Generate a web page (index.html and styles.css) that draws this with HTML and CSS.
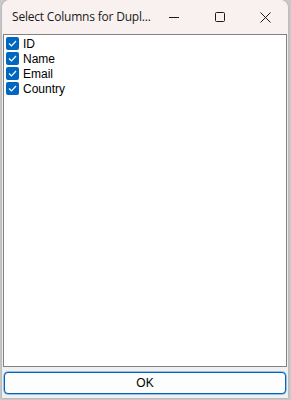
FILE: index.html
```html
<!DOCTYPE html>
<html>
<head><meta charset="utf-8"><link rel="stylesheet" href="styles.css"></head>
<body>
<div class="window">
  <div class="titlebar">
    <span class="title">Select Columns for Dupl...</span>
    <div class="controls">
      <span class="ctl"><svg width="10" height="10" viewBox="0 0 10 10"><path d="M0 5.5H10" stroke="#1a1a1a" stroke-width="1"/></svg></span>
      <span class="ctl"><svg width="10" height="10" viewBox="0 0 10 10"><rect x="0.5" y="0.5" width="9" height="9" rx="1" fill="none" stroke="#1a1a1a" stroke-width="1"/></svg></span>
      <span class="ctl"><svg width="11" height="11" viewBox="0 0 11 11"><path d="M0.5 0.5L10.5 10.5M10.5 0.5L0.5 10.5" stroke="#1a1a1a" stroke-width="1"/></svg></span>
    </div>
  </div>
  <div class="client">
    <div class="listbox">
      <div class="item"><span class="cb"><svg width="9" height="9" viewBox="0 0 9 9"><path d="M1 4.5L3.5 7L8 2" fill="none" stroke="#fff" stroke-width="1.2"/></svg></span>ID</div>
      <div class="item"><span class="cb"><svg width="9" height="9" viewBox="0 0 9 9"><path d="M1 4.5L3.5 7L8 2" fill="none" stroke="#fff" stroke-width="1.2"/></svg></span>Name</div>
      <div class="item"><span class="cb"><svg width="9" height="9" viewBox="0 0 9 9"><path d="M1 4.5L3.5 7L8 2" fill="none" stroke="#fff" stroke-width="1.2"/></svg></span>Email</div>
      <div class="item"><span class="cb"><svg width="9" height="9" viewBox="0 0 9 9"><path d="M1 4.5L3.5 7L8 2" fill="none" stroke="#fff" stroke-width="1.2"/></svg></span>Country</div>
    </div>
    <div class="btnrow"><button class="ok">OK</button></div>
  </div>
</div>
</body>
</html>
```
FILE: styles.css
```css
html, body { margin: 0; padding: 0; }
body {
  width: 291px; height: 400px;
  background: #c9c9c9;
  font-family: "Liberation Sans", Arial, sans-serif;
  overflow: hidden;
}
.window {
  margin-left: 2px;
  width: 286px;
  height: 398px;
  background: #f0f0f0;
  border-top-left-radius: 8px;
  border-top-right-radius: 8px;
  display: flex;
  flex-direction: column;
  box-shadow: 0 0 2px rgba(0,0,0,0.25);
  overflow: hidden;
}
.titlebar {
  height: 34px;
  background: #f9f1ef;
  display: flex;
  align-items: center;
  flex-shrink: 0;
}
.title {
  flex: 1;
  white-space: nowrap;
  font-family: "Open Sans", "Noto Sans", sans-serif;
  font-size: 12px;
  letter-spacing: -0.2px;
  color: #1a1a1a;
  padding-left: 10px;
  padding-bottom: 1px;
}
.controls { display: flex; height: 100%; padding-right: 2px; }
.ctl {
  width: 46px; height: 100%;
  display: flex; align-items: center; justify-content: center;
}
.client {
  flex: 1;
  display: flex;
  flex-direction: column;
  padding: 0 1px 4px 1px;
}
.listbox {
  flex: 1;
  background: #fff;
  border: 1px solid #828282;
  padding-top: 1px;
}
.item {
  height: 15px;
  display: flex;
  align-items: center;
  font-size: 12px;
  color: #000;
  padding-left: 2px;
}
.cb {
  width: 13px; height: 13px;
  background: #0067c0;
  border-radius: 2px;
  display: flex; align-items: center; justify-content: center;
  margin-right: 4px;
}
.btnrow { padding: 5px 1px 0 1px; }
.ok {
  display: block;
  width: 100%;
  height: 22px;
  background: #fdfdfd;
  border: 1px solid #0067c0;
  box-shadow: inset 0 0 0 1px #fff, 0 0 0 0.5px #4a90d0;
  border-radius: 4px;
  font-family: "Liberation Sans", Arial, sans-serif;
  font-size: 12px;
  color: #000;
  padding: 0;
}
```
